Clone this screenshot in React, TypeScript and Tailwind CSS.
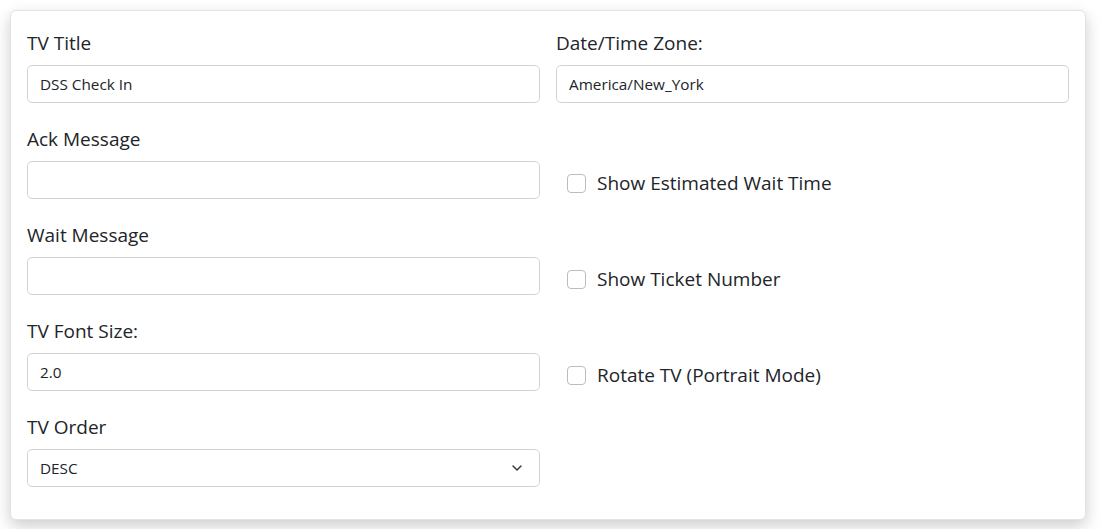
import { ChevronDown } from 'lucide-react'

const font = { fontFamily: '"Open Sans", "Noto Sans", sans-serif' }

function Field({ label, value = '' }: { label: string; value?: string }) {
    return (
        <div>
            <label className="block text-[19px] leading-[27px] text-[#212529]">{label}</label>
            <input
                readOnly
                value={value}
                className="mt-2 block h-[38px] w-full rounded-[5px] border border-[#ced4da] bg-white px-3 text-[15.3px] text-[#212529] outline-none"
            />
        </div>
    )
}

function Check({ label }: { label: string }) {
    return (
        <div className="flex items-center gap-[11px] pl-[11px] pt-[41px]">
            <span className="block size-[19px] rounded-[4px] border border-[#b9bdc2] bg-white" />
            <span className="text-[19px] leading-[27px] text-[#212529]">{label}</span>
        </div>
    )
}

export default function App() {
    return (
        <div className="min-h-screen bg-white pt-[10px] pl-[10px] pr-[15px]" style={font}>
            <div className="rounded-[6px] border border-[#e3e3e3] bg-white px-4 pt-[19px] pb-[32px] shadow-[0_6px_16px_rgba(0,0,0,0.2)]">
                <div className="grid grid-cols-2 gap-x-4 gap-y-[23px]">
                    <Field label="TV Title" value="DSS Check In" />
                    <Field label="Date/Time Zone:" value="America/New_York" />

                    <Field label="Ack Message" />
                    <Check label="Show Estimated Wait Time" />

                    <Field label="Wait Message" />
                    <Check label="Show Ticket Number" />

                    <Field label="TV Font Size:" value="2.0" />
                    <Check label="Rotate TV (Portrait Mode)" />

                    <div>
                        <label className="block text-[19px] leading-[27px] text-[#212529]">TV Order</label>
                        <div className="relative mt-2 flex h-[38px] w-full items-center rounded-[5px] border border-[#ced4da] bg-white px-3 text-[15.3px] text-[#212529]">
                            DESC
                            <ChevronDown className="absolute right-[14px] size-4 text-[#343a40]" strokeWidth={2.2} />
                        </div>
                    </div>
                    <div />
                </div>
            </div>
        </div>
    )
}
